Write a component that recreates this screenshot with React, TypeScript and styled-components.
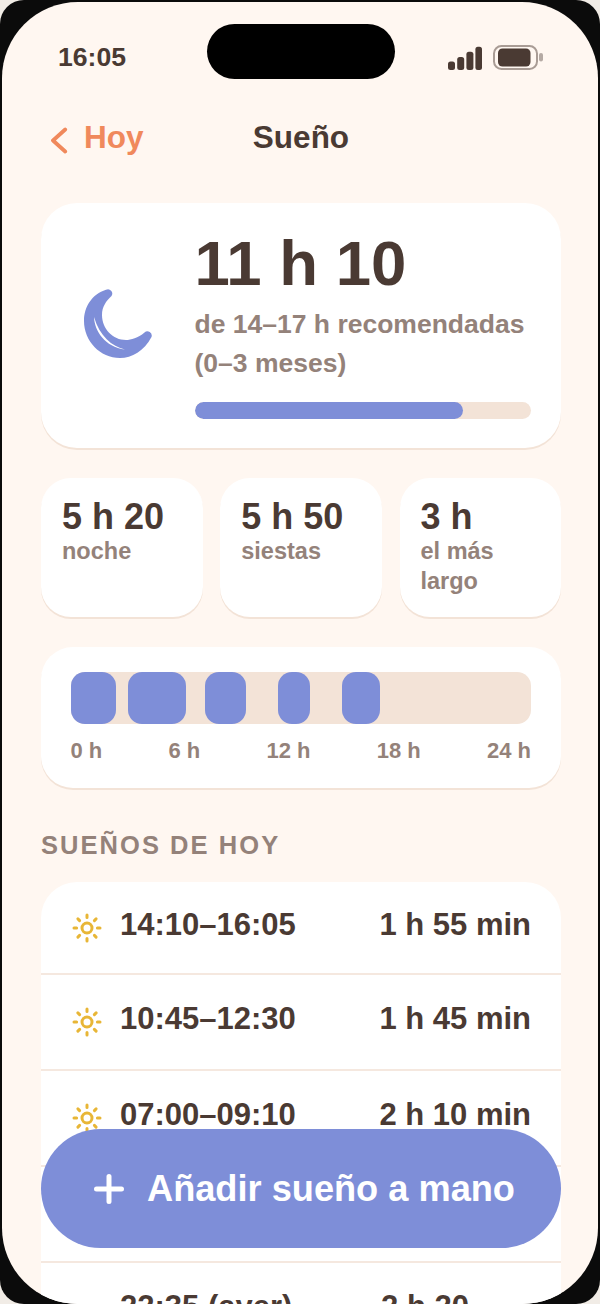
import React from 'react';
import styled, { createGlobalStyle } from 'styled-components';

const ink = '#4a3a33';
const muted = '#94827a';
const accent = '#7e8ed8';
const track = '#f3e3d7';
const orange = '#f0895c';

const GlobalStyle = createGlobalStyle`
  html, body {
    margin: 0;
    padding: 0;
    background: #f1ece6;
  }
  * {
    box-sizing: border-box;
  }
`;

const Phone = styled.div`
  width: 600px;
  height: 1304px;
  background: #0b0b0b;
  border-radius: 24px;
  padding: 2px 2px 0;
  overflow: hidden;
`;

const Screen = styled.div`
  position: relative;
  height: 1302px;
  background: #fff7f1;
  border-radius: 76px;
  overflow: hidden;
  font-family: 'Liberation Sans', Arial, sans-serif;
  color: ${ink};
`;

const StatusBar = styled.div`
  height: 96px;
  display: flex;
  align-items: flex-start;
  justify-content: space-between;
  padding: 40px 55px 0 56px;
`;

const Clock = styled.div`
  font-size: 26.6px;
  line-height: 30px;
  font-weight: 700;
`;

const Island = styled.div`
  position: absolute;
  top: 22px;
  left: 205px;
  width: 188px;
  height: 55px;
  border-radius: 28px;
  background: #000;
`;

const StatusIcons = styled.div`
  display: flex;
  align-items: flex-start;
  gap: 11px;
  padding-top: 3px;
`;

const NavBar = styled.div`
  display: grid;
  grid-template-columns: 1fr auto 1fr;
  align-items: center;
  height: 36px;
  margin-top: 21px;
  padding: 0 47px 0 49px;
`;

const BackLink = styled.div`
  display: flex;
  align-items: center;
  gap: 15px;
  font-size: 31.5px;
  font-weight: 700;
  color: ${orange};
`;

const ChevronWrap = styled.div`
  display: flex;
  margin-top: 6px;
`;

const NavTitle = styled.div`
  font-size: 31.5px;
  font-weight: 700;
`;

const Content = styled.div`
  display: flex;
  flex-direction: column;
  padding: 48px 37px 0 39px;
`;

const Card = styled.div`
  background: #fff;
  border-radius: 36px;
  box-shadow: 0 2px 0 #f3e3d7;
`;

const SummaryCard = styled(Card)`
  height: 245px;
  display: flex;
  align-items: center;
  padding: 0 30px 5px 43px;
  gap: 41.5px;
`;

const MoonWrap = styled.div`
  flex: none;
  display: flex;
  width: 69px;
  height: 69px;
`;

const SummaryBody = styled.div`
  flex: 1;
  min-width: 0;
`;

const BigValue = styled.div`
  font-size: 63.5px;
  line-height: 72px;
  font-weight: 700;
`;

const SummaryNote = styled.div`
  margin-top: 6px;
  font-size: 26.5px;
  line-height: 39px;
  font-weight: 700;
  color: ${muted};
`;

const Progress = styled.div`
  height: 17px;
  margin-top: 19px;
  border-radius: 9px;
  background: ${track};
  overflow: hidden;
`;

const ProgressFill = styled.div`
  height: 100%;
  border-radius: 9px;
  background: ${accent};
`;

const StatGrid = styled.div`
  display: grid;
  grid-template-columns: repeat(3, 161.5px);
  gap: 17.75px;
  margin-top: 30px;
`;

const StatCard = styled(Card)`
  height: 139px;
  padding: 20px 20px 0 21px;
  border-radius: 30px;
`;

const StatValue = styled.div`
  font-size: 36px;
  line-height: 38px;
  font-weight: 700;
`;

const StatLabel = styled.div`
  font-size: 23.5px;
  line-height: 30px;
  font-weight: 700;
  color: ${muted};
`;

const TimelineCard = styled(Card)`
  height: 141px;
  margin-top: 30px;
  padding: 25px 30px 0 29.5px;
  border-radius: 32px;
`;

const TimelineTrack = styled.div`
  position: relative;
  height: 52px;
  border-radius: 14px;
  background: ${track};
`;

const Block = styled.div`
  position: absolute;
  top: 0;
  bottom: 0;
  border-radius: 14px;
  background: ${accent};
`;

const HourRow = styled.div`
  display: flex;
  justify-content: space-between;
  margin-top: 14px;
  font-size: 22px;
  line-height: 26px;
  font-weight: 700;
  color: ${muted};
`;

const SectionTitle = styled.div`
  margin-top: 42px;
  font-size: 25.5px;
  line-height: 30px;
  font-weight: 700;
  letter-spacing: 2.05px;
  color: ${muted};
`;

const ListCard = styled.div`
  margin-top: 22px;
  background: #fff;
  border-radius: 36px 36px 0 0;
`;

const Row = styled.div`
  display: flex;
  align-items: flex-start;
  justify-content: space-between;
  height: 96px;
  padding: 26px 30px 0 31px;
  border-bottom: 2px solid #f5e8df;
  font-size: 31px;
  line-height: 36px;
  font-weight: 700;

  &:first-child {
    height: 93px;
    padding-top: 25px;
  }
`;

const RowStart = styled.div`
  display: flex;
  align-items: flex-start;
  gap: 18px;
`;

const IconSlot = styled.div`
  flex: none;
  width: 30px;
  height: 30px;
  margin-top: 6px;
`;

const Total = styled.span<{ $inset?: number }>`
  margin-right: ${({ $inset }) => $inset ?? 0}px;
`;

const AddButton = styled.div`
  position: absolute;
  left: 39px;
  right: 37px;
  top: 1127px;
  height: 119px;
  padding-left: 7px;
  border-radius: 60px;
  background: ${accent};
  color: #fff;
  display: flex;
  align-items: center;
  justify-content: center;
  gap: 23px;
  font-size: 36.2px;
  font-weight: 700;
`;

const rows = [
  { time: '14:10–16:05', total: '1 h 55 min', day: true },
  { time: '10:45–12:30', total: '1 h 45 min', day: true },
  { time: '07:00–09:10', total: '2 h 10 min', day: true },
  { time: '', total: '', day: false },
  { time: '22:35 (ayer)', total: '2 h 20', day: false, inset: 62 },
];

const blocks = [
  { left: 0, width: 45 },
  { left: 57.5, width: 57.5 },
  { left: 134.5, width: 40.5 },
  { left: 207, width: 32 },
  { left: 271, width: 38.5 },
];

const hours = ['0 h', '6 h', '12 h', '18 h', '24 h'];

const Signal = () => (
  <svg width="34" height="25" viewBox="0 0 34 25" fill={ink}>
    <rect x="0" y="16.5" width="7" height="8.5" rx="2.5" />
    <rect x="9.2" y="12" width="7" height="13" rx="2.5" />
    <rect x="18.4" y="6.7" width="7" height="18.3" rx="2.5" />
    <rect x="27.4" y="1.7" width="6.6" height="23.3" rx="2.5" />
  </svg>
);

const Battery = () => (
  <svg width="50" height="25" viewBox="0 0 50 25">
    <rect x="1" y="1" width="43" height="23" rx="7.5" fill="none" stroke="#a99c95" strokeWidth="2" />
    <rect x="5" y="3.5" width="32.5" height="18" rx="4.5" fill={ink} />
    <rect x="46" y="8" width="4" height="8.5" rx="2" fill="#b5aaa4" />
  </svg>
);

const Chevron = () => (
  <svg width="18" height="27" viewBox="0 0 18 27" fill="none" stroke={orange} strokeWidth="3.8" strokeLinecap="round" strokeLinejoin="round">
    <path d="M14.2 2.5 L2 13.5 L14.2 24.5" />
  </svg>
);

const Moon = () => (
  <svg width="69" height="69" viewBox="0 0 69 69">
    <path
      d="M22 0.8 C8 5 0 18 0 32 C0 52 16 69 36 69 C48 69 60 62 67.5 48 A4.3 4.3 0 0 0 60.5 43.5 C54 49 47 51 42 51 C29 51 18 40 18 26 C18 18 22 12 27.5 7 A4.3 4.3 0 0 0 22 0.8 Z"
      fill={accent}
    />
    <path d="M10 28 C10.5 42 21 58 41 60.5 C28 57.5 15.5 47 10 28 Z" fill="#fff" />
  </svg>
);

const Sun = () => (
  <svg width="30" height="30" viewBox="0 0 30 30" fill="none" stroke="#e8b636" strokeWidth="3" strokeLinecap="round">
    <circle cx="15" cy="15" r="5" />
    <path d="M15 2v2.6M15 25.4V28M2 15h2.6M25.4 15H28M5.9 5.9l1.7 1.7M22.4 22.4l1.7 1.7M5.9 24.1l1.7-1.7M22.4 7.6l1.7-1.7" />
  </svg>
);

const Plus = () => (
  <svg width="30" height="30" viewBox="0 0 30 30" stroke="#fff" strokeWidth="5" strokeLinecap="round">
    <path d="M15 2.5v25M2.5 15h25" />
  </svg>
);

export default function App() {
  return (
    <>
      <GlobalStyle />
      <Phone>
        <Screen>
          <Island />
          <StatusBar>
            <Clock>16:05</Clock>
            <StatusIcons>
              <Signal />
              <Battery />
            </StatusIcons>
          </StatusBar>
          <NavBar>
            <BackLink>
              <ChevronWrap>
                <Chevron />
              </ChevronWrap>
              Hoy
            </BackLink>
            <NavTitle>Sueño</NavTitle>
          </NavBar>
          <Content>
            <SummaryCard>
              <MoonWrap>
                <Moon />
              </MoonWrap>
              <SummaryBody>
                <BigValue>11 h 10</BigValue>
                <SummaryNote>
                  de 14–17 h recomendadas
                  <br />
                  (0–3 meses)
                </SummaryNote>
                <Progress>
                  <ProgressFill style={{ width: `${(268.4 / 337) * 100}%` }} />
                </Progress>
              </SummaryBody>
            </SummaryCard>
            <StatGrid>
              <StatCard>
                <StatValue>5 h 20</StatValue>
                <StatLabel>noche</StatLabel>
              </StatCard>
              <StatCard>
                <StatValue>5 h 50</StatValue>
                <StatLabel>siestas</StatLabel>
              </StatCard>
              <StatCard>
                <StatValue>3 h</StatValue>
                <StatLabel>
                  el más
                  <br />
                  largo
                </StatLabel>
              </StatCard>
            </StatGrid>
            <TimelineCard>
              <TimelineTrack>
                {blocks.map((block) => (
                  <Block key={block.left} style={{ left: block.left, width: block.width }} />
                ))}
              </TimelineTrack>
              <HourRow>
                {hours.map((hour) => (
                  <span key={hour}>{hour}</span>
                ))}
              </HourRow>
            </TimelineCard>
            <SectionTitle>SUEÑOS DE HOY</SectionTitle>
            <ListCard>
              {rows.map((row, index) => (
                <Row key={index}>
                  <RowStart>
                    <IconSlot>{row.day && <Sun />}</IconSlot>
                    <span>{row.time}</span>
                  </RowStart>
                  <Total $inset={row.inset}>{row.total}</Total>
                </Row>
              ))}
            </ListCard>
          </Content>
          <AddButton>
            <Plus />
            Añadir sueño a mano
          </AddButton>
        </Screen>
      </Phone>
    </>
  );
}
